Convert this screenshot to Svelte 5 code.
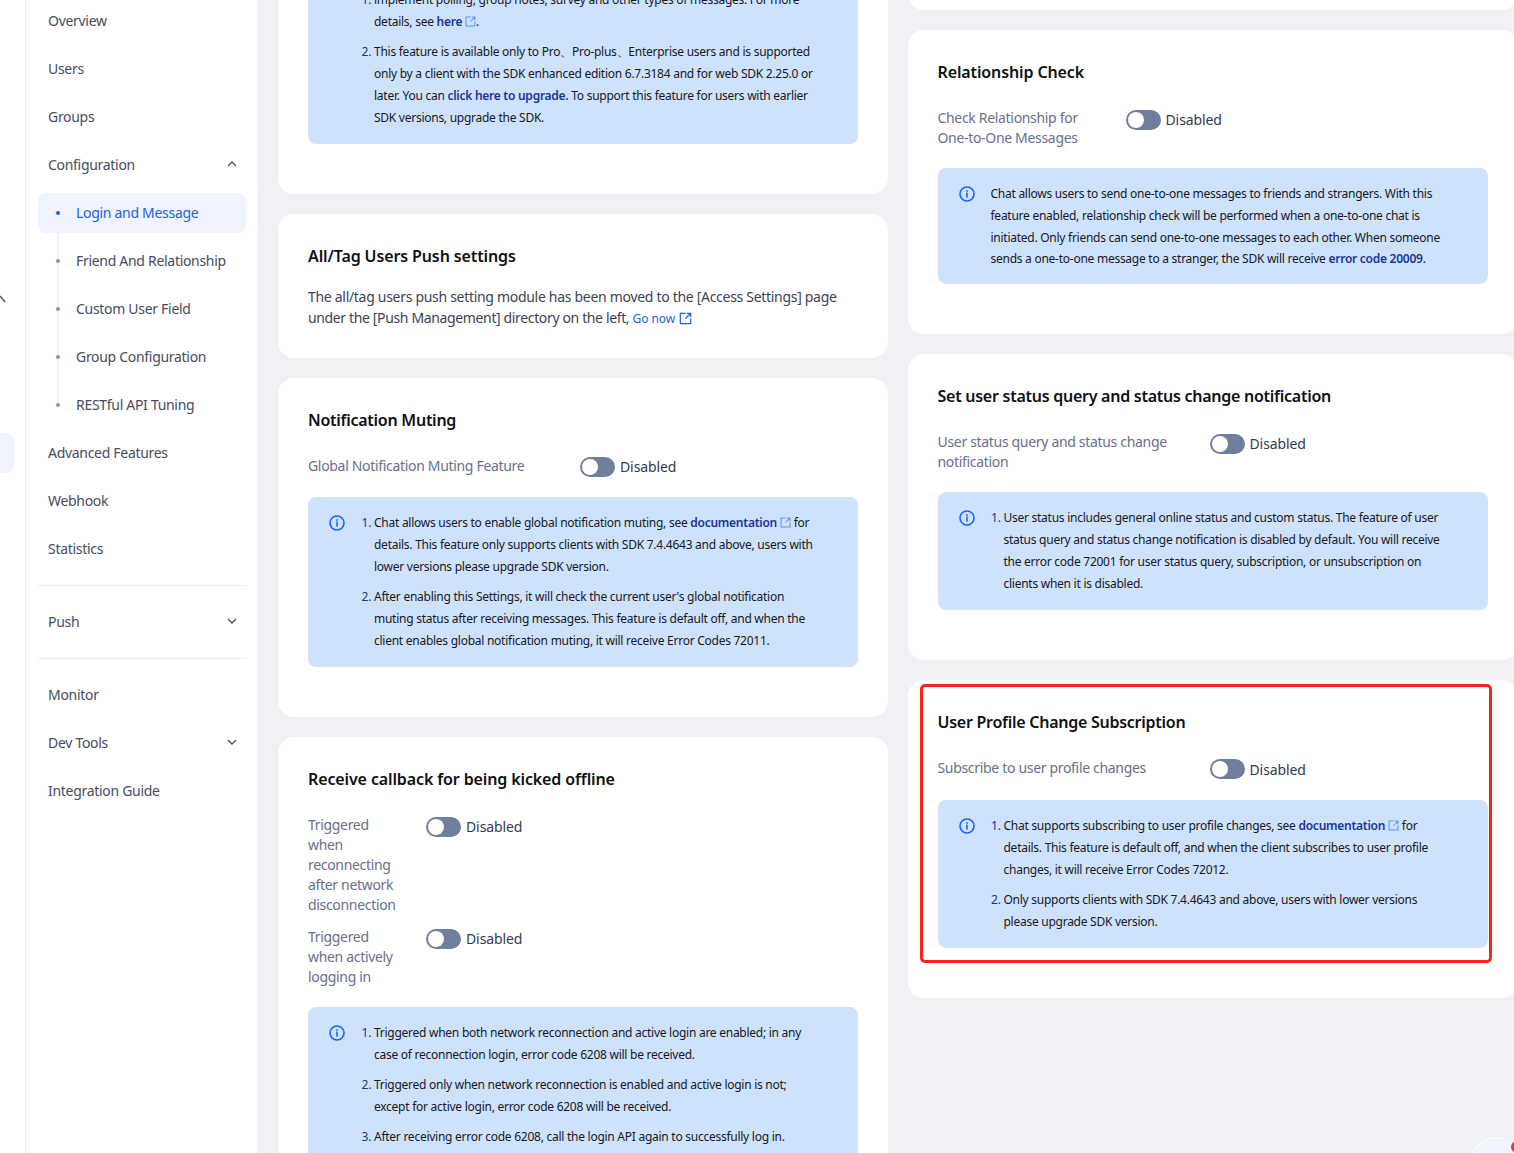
<script>
  const topItems = ['Overview', 'Users', 'Groups'];
  const subItems = ['Login and Message', 'Friend And Relationship', 'Custom User Field', 'Group Configuration', 'RESTful API Tuning'];
</script>

{#snippet info()}
  <svg class="info" viewBox="0 0 16 16" width="16" height="16" fill="none" aria-hidden="true">
    <circle cx="8" cy="8" r="7" stroke="#1664ff" stroke-width="1.6" />
    <rect x="7.2" y="6.6" width="1.6" height="5" fill="#1664ff" />
    <rect x="7.2" y="4.2" width="1.6" height="1.6" fill="#1664ff" />
  </svg>
{/snippet}

{#snippet ext(cls)}
  <svg class={cls} viewBox="0 0 12 12" fill="none" aria-hidden="true">
    <path d="M6 1.2H1.2v9.6h9.6V6M7.4 1.2h3.4v3.4M10.6 1.4 6 6" stroke="currentColor" stroke-width="1.1" />
  </svg>
{/snippet}

{#snippet toggle()}
  <span class="control"><span class="switch"><span class="knob"></span></span><span>Disabled</span></span>
{/snippet}

{#snippet chevron(up)}
  <svg class="chev" viewBox="0 0 10 6" width="10" height="6" fill="none" aria-hidden="true">
    <path d={up ? 'M1 5l4-4 4 4' : 'M1 1l4 4 4-4'} stroke="#4a5064" stroke-width="1.4" />
  </svg>
{/snippet}

<div class="page">
  <div class="rail">
    <svg class="rail-mark" viewBox="0 0 6 8" width="6" height="8" fill="none" aria-hidden="true"><path d="M0 1l5 6" stroke="#4a5064" stroke-width="1.4" /></svg>
    <span class="rail-active"></span>
  </div>

  <nav class="side">
    {#each topItems as t}<div class="item">{t}</div>{/each}
    <div class="item between">Configuration {@render chevron(true)}</div>
    <div class="tree">
      {#each subItems as s, i}
        <div class="item sub" class:active={i === 0}><span class="dot"></span>{s}</div>
      {/each}
    </div>
    <div class="item">Advanced Features</div>
    <div class="item">Webhook</div>
    <div class="item">Statistics</div>
    <hr />
    <div class="item between">Push {@render chevron(false)}</div>
    <hr />
    <div class="item">Monitor</div>
    <div class="item between">Dev Tools {@render chevron(false)}</div>
    <div class="item">Integration Guide</div>
  </nav>

  <main class="main">
    <div class="col">
      <section class="card first">
        <div class="box">
          <span class="info-space"></span>
          <ol>
            <li value="1" class="nomark">implement polling, group notes, survey and other types of messages. For more<br />details, see <a href="#x">here</a> {@render ext('mini')}.</li>
            <li>This feature is available only to Pro、Pro-plus、Enterprise users and is supported<br />only by a client with the SDK enhanced edition 6.7.3184 and for web SDK 2.25.0 or<br />later. You can <a href="#x">click here to upgrade.</a> To support this feature for users with earlier<br />SDK versions, upgrade the SDK.</li>
          </ol>
        </div>
      </section>

      <section class="card push">
        <h2 class="loose">All/Tag Users Push settings</h2>
        <p class="lead">The all/tag users push setting module has been moved to the [Access Settings] page<br /><span class="tight">under the [Push Management] directory on the left,</span> <a href="#x" class="go">Go now {@render ext('big')}</a></p>
      </section>

      <section class="card">
        <h2>Notification Muting</h2>
        <div class="row"><div class="label w272">Global Notification Muting Feature</div>{@render toggle()}</div>
        <div class="box">
          {@render info()}
          <ol>
            <li>Chat allows users to enable global notification muting, see <a href="#x">documentation</a> {@render ext('mini')} for<br />details. This feature only supports clients with SDK 7.4.4643 and above, users with<br />lower versions please upgrade SDK version.</li>
            <li>After enabling this Settings, it will check the current user's global notification<br />muting status after receiving messages. This feature is default off, and when the<br />client enables global notification muting, it will receive Error Codes 72011.</li>
          </ol>
        </div>
      </section>

      <section class="card">
        <h2 class="loose">Receive callback for being kicked offline</h2>
        <div class="row tall"><div class="label w118">Triggered when reconnecting after network disconnection</div>{@render toggle()}</div>
        <div class="row tall"><div class="label w118">Triggered when actively logging in</div>{@render toggle()}</div>
        <div class="box">
          {@render info()}
          <ol>
            <li>Triggered when both network reconnection and active login are enabled; in any<br />case of reconnection login, error code 6208 will be received.</li>
            <li>Triggered only when network reconnection is enabled and active login is not;<br />except for active login, error code 6208 will be received.</li>
            <li>After receiving error code 6208, call the login API again to successfully log in.</li>
          </ol>
        </div>
      </section>
    </div>

    <div class="col right">
      <section class="card stub"></section>

      <section class="card">
        <h2 class="loose">Relationship Check</h2>
        <div class="row tall"><div class="label w188">Check Relationship for<br />One-to-One Messages</div>{@render toggle()}</div>
        <div class="box">
          {@render info()}
          <p>Chat allows users to send one-to-one messages to friends and strangers. With this<br />feature enabled, relationship check will be performed when a one-to-one chat is<br />initiated. Only friends can send one-to-one messages to each other. When someone<br />sends a one-to-one message to a stranger, the SDK will receive <a href="#x">error code 20009</a>.</p>
        </div>
      </section>

      <section class="card">
        <h2>Set user status query and status change notification</h2>
        <div class="row tall"><div class="label w272">User status query and status change<br />notification</div>{@render toggle()}</div>
        <div class="box">
          {@render info()}
          <ol>
            <li>User status includes general online status and custom status. The feature of user<br />status query and status change notification is disabled by default. You will receive<br />the error code 72001 for user status query, subscription, or unsubscription on<br />clients when it is disabled.</li>
          </ol>
        </div>
      </section>

      <section class="card marked">
        <h2>User Profile Change Subscription</h2>
        <div class="row wide"><div class="label w272">Subscribe to user profile changes</div>{@render toggle()}</div>
        <div class="box">
          {@render info()}
          <ol>
            <li>Chat supports subscribing to user profile changes, see <a href="#x">documentation</a> {@render ext('mini')} for<br />details. This feature is default off, and when the client subscribes to user profile<br />changes, it will receive Error Codes 72012.</li>
            <li>Only supports clients with SDK 7.4.4643 and above, users with lower versions<br />please upgrade SDK version.</li>
          </ol>
        </div>
        <span class="redmark"></span>
      </section>
    </div>

    <span class="fab"><span class="fab-dot"></span></span>
  </main>
</div>

<style>
  :global(body) { margin: 0; }
  .page {
    display: flex;
    height: 1153px;
    width: 1514px;
    overflow: hidden;
    position: relative;
    font-family: "Noto Sans", sans-serif;
    background: #f0f1f5;
    color: #333a4c;
  }
  .rail {
    position: relative;
    flex: 0 0 25px;
    background: #fff;
    border-right: 1px solid #eceef2;
  }
  .rail-mark {
    position: absolute;
    left: 0;
    top: 295px;
  }
  .rail-active {
    position: absolute;
    left: -10px;
    top: 433px;
    width: 24px;
    height: 40px;
    border-radius: 8px;
    background: #eff4ff;
  }
  .side {
    flex: 0 0 208px;
    padding: 1px 12px 0;
    background: #fff;
    font-size: 14px;
    letter-spacing: -0.3px;
    color: #464d60;
  }
  .item {
    box-sizing: border-box;
    height: 40px;
    margin-bottom: 8px;
    padding: 0 10px 2px;
    display: flex;
    align-items: center;
    border-radius: 8px;
    white-space: nowrap;
  }
  .between { justify-content: space-between; }
  .chev { margin-right: -1px; }
  .tree { position: relative; }
  .tree::before {
    content: '';
    position: absolute;
    left: 19px;
    top: 20px;
    height: 192px;
    width: 2px;
    background: #f0f2f7;
  }
  .sub { position: relative; padding-left: 38px; }
  .dot {
    position: absolute;
    left: 18px;
    top: 18px;
    width: 4px;
    height: 4px;
    border-radius: 50%;
    background: #8a93a8;
  }
  .active { background: #eff4ff; color: #1d5fe6; }
  .active .dot { background: #1d5fe6; }
  hr {
    border: 0;
    border-top: 1px solid #eceef2;
    margin: 16px 0;
    padding: 0;
    height: 0;
  }

  .main {
    flex: 1;
    display: flex;
    gap: 20px;
    padding: 0 0 0 20px;
    min-width: 0;
    position: relative;
  }
  .col { flex: 0 0 610px; width: 610px; min-width: 0; display: flex; flex-direction: column; gap: 20px; }
  .right { margin-left: -0.5px; }
  .card {
    background: #fff;
    border-radius: 16px;
    padding: 30px 30px 50px;
    position: relative;
    box-sizing: border-box;
  }
  .first { margin-top: -26px; padding-top: 0; border-radius: 0 0 16px 16px; }
  .stub { height: 30px; margin-top: -20px; padding: 0; border-radius: 0 0 16px 16px; flex: none; }
  .push { padding-bottom: 29px; }
  h2 {
    margin: 0 0 24px;
    font-size: 16px;
    line-height: 24px;
    font-weight: 600;
    letter-spacing: -0.26px;
    color: #0d0f14;
  }
  h2.loose { letter-spacing: -0.12px; }
  .lead {
    margin: -6px 0 0;
    font-size: 14px;
    line-height: 21px;
    letter-spacing: -0.3px;
    color: #3c4354;
  }
  .tight { letter-spacing: -0.36px; }
  .go { color: #1d5fe6; font-size: 12px; font-weight: 400; }
  .row {
    display: flex;
    align-items: flex-start;
    margin-bottom: 20px;
    min-height: 21px;
    font-size: 14px;
  }
  .wide { min-height: 22px; }
  .wide .control { height: 22px; }
  .tall + .tall { margin-top: -8px; }
  .label { color: #697089; line-height: 20px; flex: none; letter-spacing: -0.32px; box-sizing: border-box; }
  .w272 { width: 272px; }
  .w188 { width: 188px; }
  .w118 { width: 118px; padding-right: 24px; }
  .control { display: flex; align-items: center; gap: 5px; height: 21px; color: #333a4c; letter-spacing: -0.1px; }
  .tall .control { height: 23px; }
  .switch {
    width: 35px;
    height: 20px;
    border-radius: 10px;
    background: #707f9b;
    position: relative;
    display: block;
  }
  .knob {
    position: absolute;
    left: 2px;
    top: 2px;
    width: 16px;
    height: 16px;
    border-radius: 50%;
    background: #fff;
  }
  .box {
    background: #cfe2fc;
    border-radius: 8px;
    padding: 15px 30px 15px 21px;
    display: flex;
    font-size: 12px;
    line-height: 22px;
    letter-spacing: -0.26px;
    color: #15181f;
    white-space: nowrap;
    min-width: 0;
  }
  .info { flex: none; margin-top: 3px; }
  .info-space { flex: none; width: 16px; }
  .box ol { margin: 0; padding: 0 0 0 29px; }
  .box p { margin: 0 0 -1px 16px; line-height: 21.75px; }
  li + li { margin-top: 8px; }
  li::marker { color: #17359a; }
  a { color: #17359a; text-decoration: none; font-weight: 600; }
  a.go { color: #1d5fe6; font-weight: 400; letter-spacing: -0.1px; }
  .mini { width: 11px; height: 11px; color: #5b93f0; vertical-align: -1px; }
  .big { width: 13px; height: 13px; color: #1d5fe6; vertical-align: -2px; margin-left: 1px; }
  .redmark {
    position: absolute;
    left: 12px;
    top: 4px;
    width: 572px;
    height: 279px;
    box-sizing: border-box;
    border: 3px solid #f5261d;
    border-radius: 5px;
    pointer-events: none;
  }
  .fab {
    position: absolute;
    left: 1212px;
    top: 1137px;
    width: 50px;
    height: 50px;
    border-radius: 50%;
    background: #f0f4ff;
    border: 1px solid #fff;
  }
  .fab-dot {
    position: absolute;
    left: 40px;
    top: 3px;
    width: 12px;
    height: 12px;
    border-radius: 50%;
    background: #e53935;
  }
</style>
